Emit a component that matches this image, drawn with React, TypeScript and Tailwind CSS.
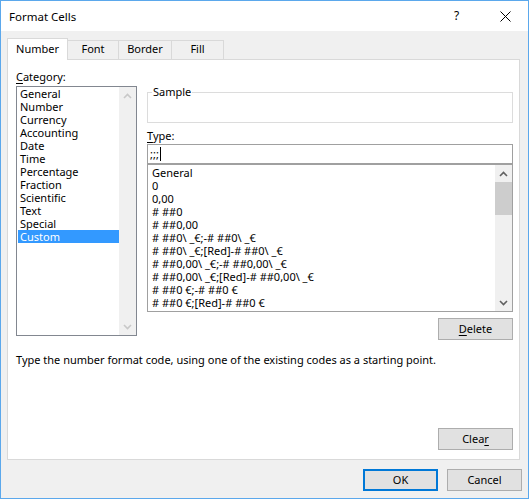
import React from "react";

const categories = [
  "General",
  "Number",
  "Currency",
  "Accounting",
  "Date",
  "Time",
  "Percentage",
  "Fraction",
  "Scientific",
  "Text",
  "Special",
  "Custom",
];

const types = [
  "General",
  "0",
  "0,00",
  "# ##0",
  "# ##0,00",
  "# ##0\\ _€;-# ##0\\ _€",
  "# ##0\\ _€;[Red]-# ##0\\ _€",
  "# ##0,00\\ _€;-# ##0,00\\ _€",
  "# ##0,00\\ _€;[Red]-# ##0,00\\ _€",
  "# ##0 €;-# ##0 €",
  "# ##0 €;[Red]-# ##0 €",
];

function Chevron({ up, color }: { up: boolean; color: string }) {
  return (
    <svg width="9" height="6" viewBox="0 0 9 6">
      <path
        d={up ? "M1 5 L4.5 1.5 L8 5" : "M1 1 L4.5 4.5 L8 1"}
        fill="none"
        stroke={color}
        strokeWidth="1.6"
      />
    </svg>
  );
}

function Btn({ children, primary }: { children: React.ReactNode; primary?: boolean }) {
  return (
    <div
      className={
        primary
          ? "w-[75px] h-[22px] bg-[#e1e1e1] border-2 border-[#0078d7] flex items-center justify-center"
          : "w-[75px] h-[22px] bg-[#e1e1e1] border border-[#adadad] flex items-center justify-center"
      }
    >
      {children}
    </div>
  );
}

export default function App() {
  return (
    <div
      className="w-[529px] h-[499px] border border-[#5ba8ec] flex flex-col text-[11px] text-black bg-[#f0f0f0] overflow-hidden"
      style={{ fontFamily: '"Segoe UI", "Noto Sans", sans-serif' }}
    >
      {/* Title bar */}
      <div className="h-[30px] bg-white flex items-center pl-[8px] shrink-0">
        <div className="flex-1 pt-[1px] text-[11.5px]">Format Cells</div>
        <div className="w-[10px] text-[12px] mr-[36px] leading-none pb-[1px]">?</div>
        <svg width="11" height="11" viewBox="0 0 11 11" className="mr-[17px]">
          <path d="M0.5 0.5 L10.5 10.5 M10.5 0.5 L0.5 10.5" stroke="#000" strokeWidth="1" />
        </svg>
      </div>

      {/* Body */}
      <div className="flex-1 flex flex-col pl-[6px] pr-[6px] pt-[7px]">
        {/* Tabs */}
        <div className="flex items-end h-[21px]">
          <div className="relative z-10 w-[61px] h-[22px] -mb-px bg-white border border-b-0 border-[#d9d9d9] flex items-center justify-center pb-[1px]">
            Number
          </div>
          <div className="w-[52px] h-[19px] -ml-px bg-[#f0f0f0] border border-b-0 border-[#d9d9d9] flex items-center justify-center pb-[1px]">
            Font
          </div>
          <div className="w-[54px] h-[19px] -ml-px bg-[#f0f0f0] border border-b-0 border-[#d9d9d9] flex items-center justify-center pb-[1px]">
            Border
          </div>
          <div className="w-[53px] h-[19px] -ml-px bg-[#f0f0f0] border border-b-0 border-[#d9d9d9] flex items-center justify-center pb-[1px]">
            Fill
          </div>
        </div>

        {/* Panel */}
        <div className="w-[513px] h-[401px] bg-white border border-[#d9d9d9] flex flex-col pl-[8px] pr-[6px] pt-[9px] shrink-0">
          <div className="flex gap-[10px]">
            {/* Left column */}
            <div className="w-[121px] flex flex-col">
              <div className="h-[15px] leading-[15px]">
                <span className="underline underline-offset-2">C</span>ategory:
              </div>
              <div className="mt-[2px] h-[250px] border border-[#828790] flex">
                <div className="flex-1 flex flex-col pl-[1px] leading-[13px]">
                  {categories.map((c) => (
                    <div
                      key={c}
                      className={
                        c === "Custom"
                          ? "h-[13px] pl-[2px] bg-[#3399ff] text-white"
                          : "h-[13px] pl-[2px]"
                      }
                    >
                      {c}
                    </div>
                  ))}
                </div>
                <div className="w-[17px] bg-[#f0f0f0] flex flex-col justify-between">
                  <div className="h-[17px] flex items-center justify-center">
                    <Chevron up color="#c8c8c8" />
                  </div>
                  <div className="h-[17px] flex items-center justify-center">
                    <Chevron up={false} color="#c8c8c8" />
                  </div>
                </div>
              </div>
            </div>

            {/* Right column */}
            <div className="flex-1 flex flex-col">
              <div className="relative mt-[23px] h-[31px] border border-[#dcdcdc]">
                <div className="absolute left-[4px] top-[-9px] bg-white px-[1px] leading-[15px]">
                  Sample
                </div>
              </div>
              <div className="mt-[5px] h-[15px] leading-[15px]">
                <span className="underline underline-offset-2">T</span>ype:
              </div>
              <div className="mt-[1px] h-[20px] border border-[#a0a0a0] flex items-center pl-[2px]">
                <span>;;;</span>
                <span className="w-px h-[14px] bg-black ml-[1px]" />
              </div>
              <div className="h-[148px] border border-[#a0a0a0] flex overflow-hidden">
                <div className="flex-1 flex flex-col pt-[1px] pl-[4px] leading-[13px] overflow-hidden">
                  {types.map((t, i) => (
                    <div key={i} className="h-[13px] whitespace-pre">
                      {t}
                    </div>
                  ))}
                </div>
                <div className="w-[17px] bg-[#f0f0f0] flex flex-col">
                  <div className="h-[17px] flex items-center justify-center">
                    <Chevron up color="#606060" />
                  </div>
                  <div className="h-[33px] bg-[#cdcdcd]" />
                  <div className="flex-1" />
                  <div className="h-[17px] flex items-center justify-center">
                    <Chevron up={false} color="#606060" />
                  </div>
                </div>
              </div>
              <div className="mt-[6px] self-end">
                <Btn>
                  <span className="underline underline-offset-2">D</span>elete
                </Btn>
              </div>
            </div>
          </div>

          <div className="mt-[12px] h-[15px] leading-[15px]">
            Type the number format code, using one of the existing codes as a starting point.
          </div>

          <div className="mt-auto mb-[9px] self-end">
            <Btn>
              Clea<span className="underline underline-offset-2">r</span>
            </Btn>
          </div>
        </div>

        {/* Bottom buttons */}
        <div className="mt-[9px] flex justify-end gap-[9px]">
          <Btn primary>OK</Btn>
          <Btn>Cancel</Btn>
        </div>
      </div>
    </div>
  );
}
